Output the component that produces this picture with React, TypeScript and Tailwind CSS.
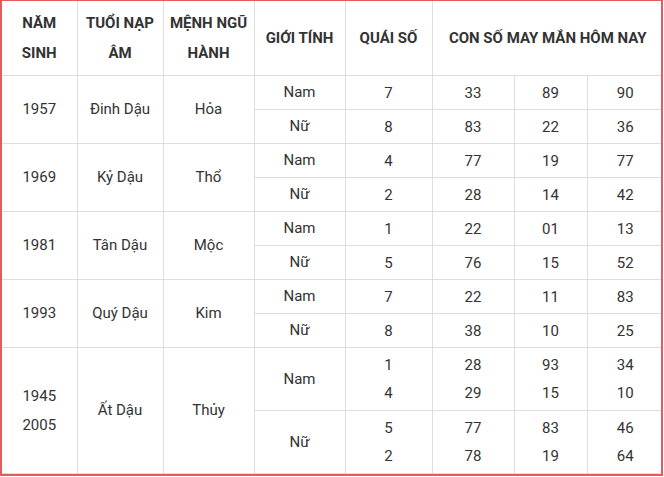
import React from "react";

type Sub = { gender: string; qs: string[]; nums: string[][] };
type Group = { years: string[]; tuoi: string; menh: string; subs: Sub[] };

const data: Group[] = [
  {
    years: ["1957"],
    tuoi: "Đinh Dậu",
    menh: "Hỏa",
    subs: [
      { gender: "Nam", qs: ["7"], nums: [["33", "89", "90"]] },
      { gender: "Nữ", qs: ["8"], nums: [["83", "22", "36"]] },
    ],
  },
  {
    years: ["1969"],
    tuoi: "Kỷ Dậu",
    menh: "Thổ",
    subs: [
      { gender: "Nam", qs: ["4"], nums: [["77", "19", "77"]] },
      { gender: "Nữ", qs: ["2"], nums: [["28", "14", "42"]] },
    ],
  },
  {
    years: ["1981"],
    tuoi: "Tân Dậu",
    menh: "Mộc",
    subs: [
      { gender: "Nam", qs: ["1"], nums: [["22", "01", "13"]] },
      { gender: "Nữ", qs: ["5"], nums: [["76", "15", "52"]] },
    ],
  },
  {
    years: ["1993"],
    tuoi: "Quý Dậu",
    menh: "Kim",
    subs: [
      { gender: "Nam", qs: ["7"], nums: [["22", "11", "83"]] },
      { gender: "Nữ", qs: ["8"], nums: [["38", "10", "25"]] },
    ],
  },
  {
    years: ["1945", "2005"],
    tuoi: "Ất Dậu",
    menh: "Thủy",
    subs: [
      {
        gender: "Nam",
        qs: ["1", "4"],
        nums: [
          ["28", "93", "34"],
          ["29", "15", "10"],
        ],
      },
      {
        gender: "Nữ",
        qs: ["5", "2"],
        nums: [
          ["77", "83", "46"],
          ["78", "19", "64"],
        ],
      },
    ],
  },
];

const cell = "border border-[#dedede] text-center align-middle p-0";

const Lines = ({ items, lh }: { items: string[]; lh: string }) => (
  <div className={lh}>
    {items.map((t, i) => (
      <div key={i}>{t}</div>
    ))}
  </div>
);

export default function App() {
  return (
    <div className="w-[663px] h-[476px] overflow-hidden bg-white border-t border-l-2 border-r-2 border-b-2 border-[#e25c5c] font-['Roboto',sans-serif] text-[15px] text-[#333]">
      <table className="border-collapse table-fixed w-[661px] -mt-px">
        <colgroup>
          <col className="w-[75px]" />
          <col className="w-[86px]" />
          <col className="w-[91px]" />
          <col className="w-[91px]" />
          <col className="w-[87px]" />
          <col className="w-[82px]" />
          <col className="w-[73px]" />
          <col className="w-[76px]" />
        </colgroup>
        <thead>
          <tr className="h-[75px] font-bold">
            <th className={`${cell} border-l-0 leading-[30px]`}>
              NĂM
              <br />
              SINH
            </th>
            <th className={`${cell} leading-[30px]`}>
              TUỔI NẠP
              <br />
              ÂM
            </th>
            <th className={`${cell} leading-[30px]`}>
              MỆNH NGŨ
              <br />
              HÀNH
            </th>
            <th className={cell}>GIỚI TÍNH</th>
            <th className={cell}>QUÁI SỐ</th>
            <th className={`${cell} border-r-0`} colSpan={3}>
              CON SỐ MAY MẮN HÔM NAY
            </th>
          </tr>
        </thead>
        <tbody>
          {data.map((g, gi) => {
            const last = gi === data.length - 1;
            const h = last ? "h-[63px]" : "h-[34px]";
            return g.subs.map((s, si) => (
              <tr key={`${gi}-${si}`} className={h}>
                {si === 0 && (
                  <>
                    <td className={`${cell} border-l-0`} rowSpan={2}>
                      <Lines items={g.years} lh="leading-[29px]" />
                    </td>
                    <td className={cell} rowSpan={2}>
                      {g.tuoi}
                    </td>
                    <td className={cell} rowSpan={2}>
                      {g.menh}
                    </td>
                  </>
                )}
                <td className={cell}>{s.gender}</td>
                <td className={cell}>
                  <Lines items={s.qs} lh="leading-[28px]" />
                </td>
                {[0, 1, 2].map((c) => (
                  <td key={c} className={`${cell} ${c === 2 ? "border-r-0" : ""}`}>
                    <Lines items={s.nums.map((r) => r[c])} lh="leading-[28px]" />
                  </td>
                ))}
              </tr>
            ));
          })}
        </tbody>
      </table>
    </div>
  );
}
